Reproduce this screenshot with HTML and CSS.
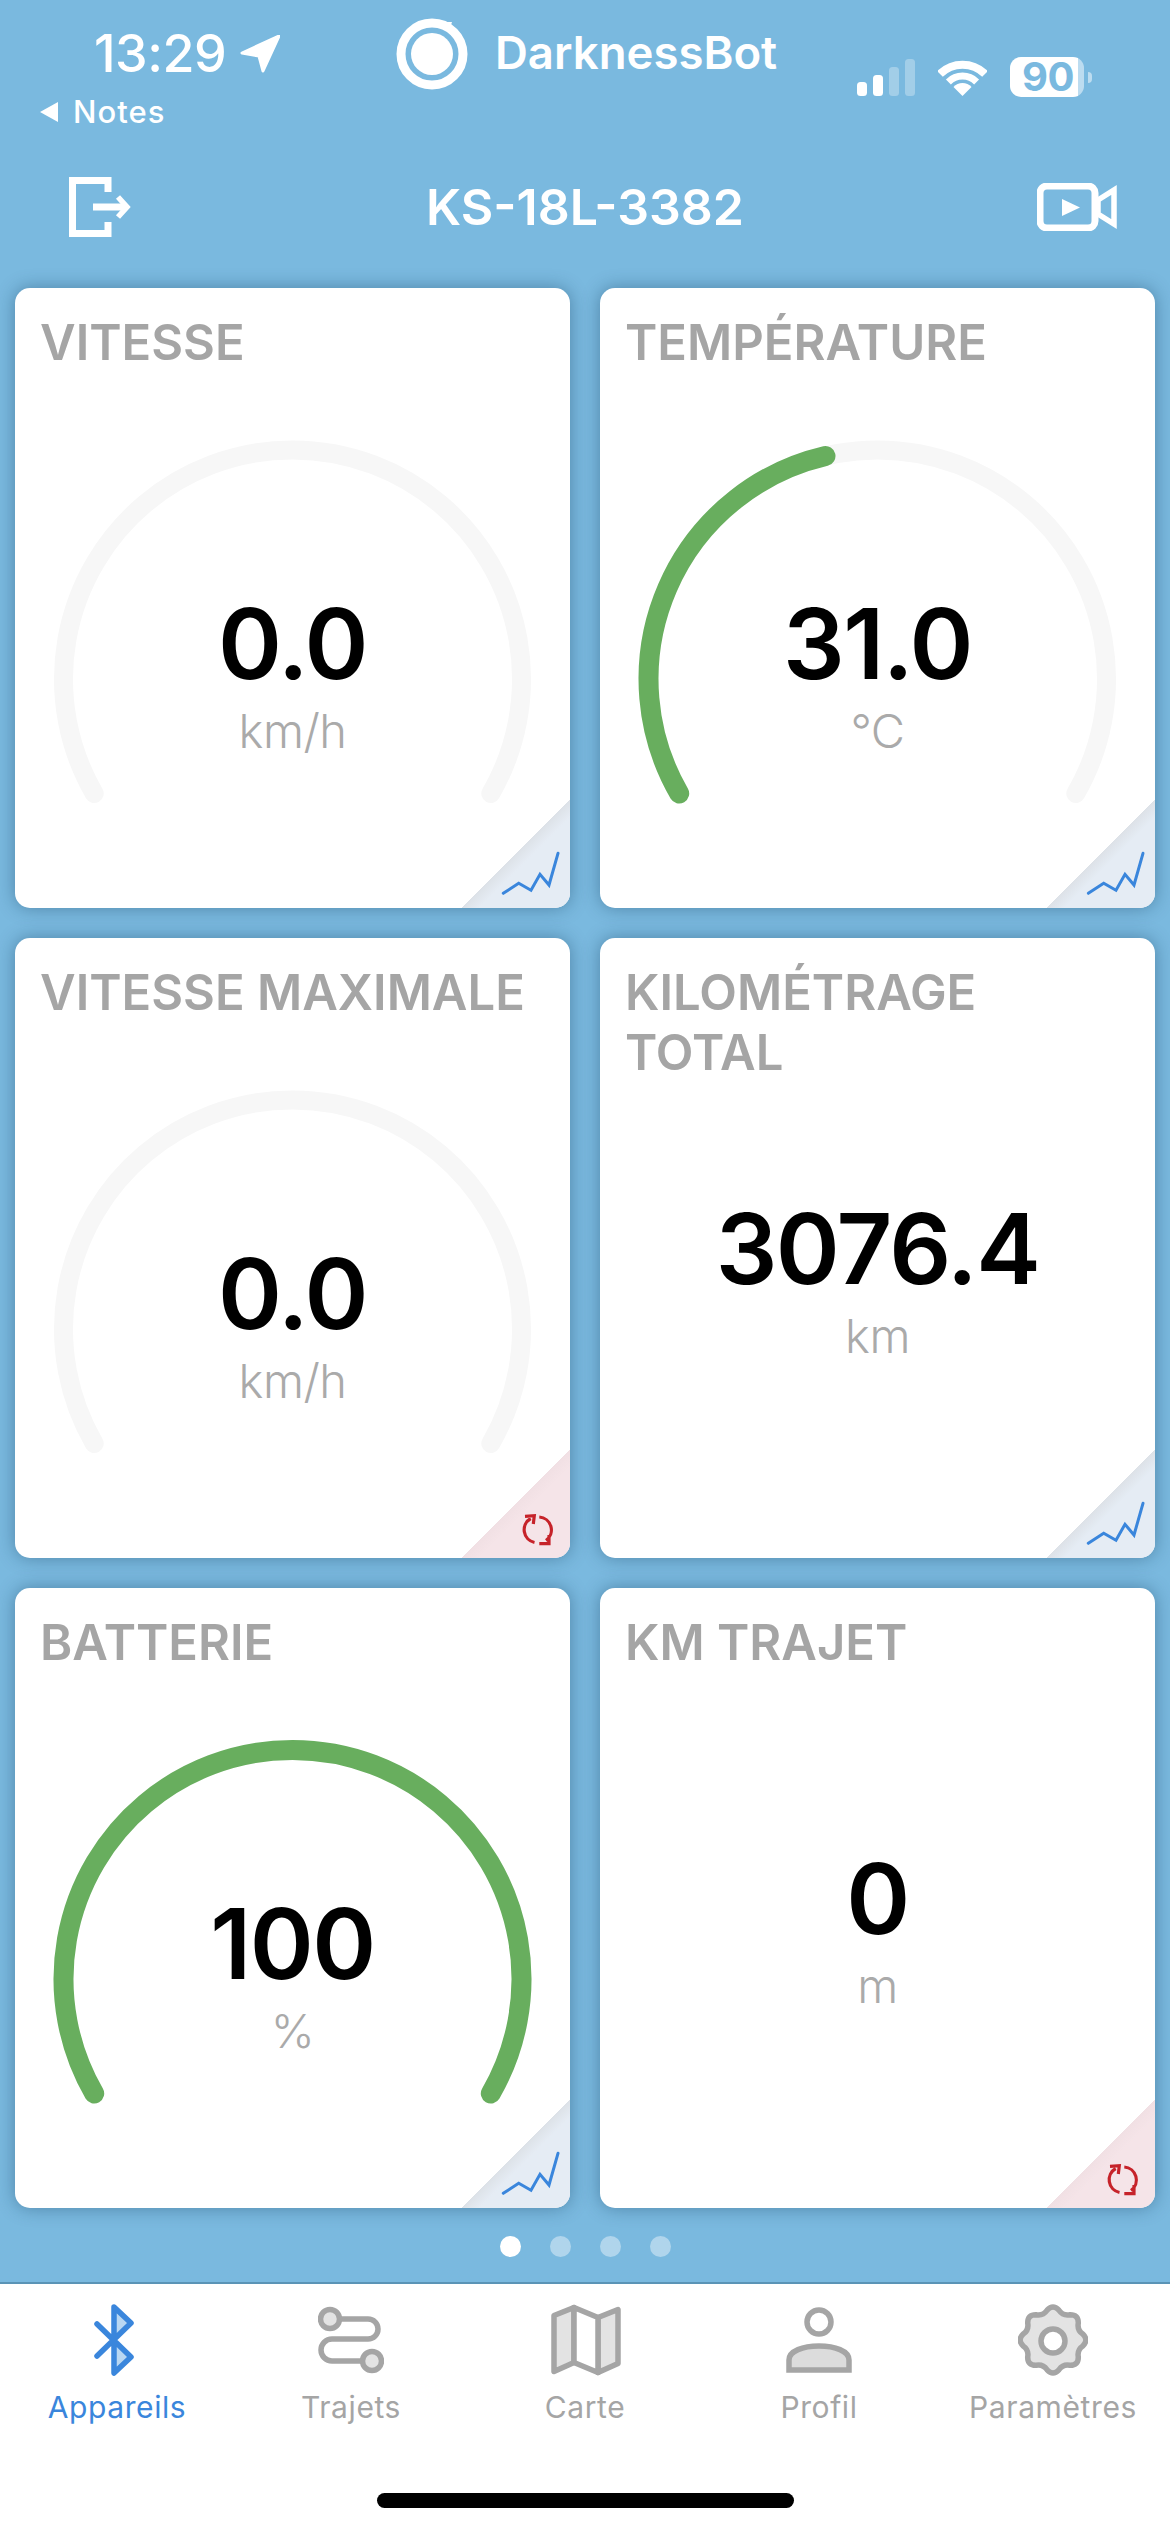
FILE: index.html
```html
<!DOCTYPE html>
<html lang="fr">
<head>
<meta charset="utf-8">
<title>DarknessBot</title>
<link rel="stylesheet" href="styles.css">
</head>
<body>
<div class="screen">
  <header class="status">
    <div class="status-left">
      <div class="clock-row">
        <span class="clock">13:29</span>
        <svg class="loc" width="40" height="38" viewBox="0 0 40 38"><path d="M39 1 L2 18 L19 21 L23 36 Z"/></svg>
      </div>
      <div class="back-row">
        <svg class="back-arrow" width="20" height="20" viewBox="0 0 20 20"><path d="M19 0 V20 L1 10 Z"/></svg>
        <span class="back">Notes</span>
      </div>
    </div>
    <div class="brand">
      <svg class="logo" width="72" height="72" viewBox="0 0 72 72">
        <circle class="logo-ring" cx="36" cy="36" r="31"/>
        <circle class="logo-dot" cx="36" cy="36" r="21"/>
        <path class="logo-tick" d="M44 4 L56 4 L54 10 Z"/>
      </svg>
      <span class="brand-name">DarknessBot</span>
    </div>
    <div class="indicators">
      <svg class="signal" width="58" height="38" viewBox="0 0 58 38">
        <rect x="0" y="23" width="10" height="14" rx="3.5"/>
        <rect x="16" y="16" width="10" height="21" rx="3.5"/>
        <rect class="dim" x="32" y="8" width="10" height="29" rx="3.5"/>
        <rect class="dim" x="48" y="0" width="10" height="37" rx="3.5"/>
      </svg>
      <svg class="wifi" width="49" height="37" viewBox="0 0 49 37">
        <path class="wifi-band" d="M2 15 A32 32 0 0 1 47 15"/>
        <path class="wifi-band thin" d="M10.4 22.9 A20 20 0 0 1 38.6 22.9"/>
        <path d="M24.5 37 L15.5 28 A12 12 0 0 1 33.5 28 Z"/>
      </svg>
      <div class="battery">
        <div class="battery-body"><span class="battery-level">90</span></div>
        <span class="battery-tip"></span>
      </div>
    </div>
  </header>

  <nav class="navbar">
    <svg class="door" width="62" height="60" viewBox="0 0 62 60">
      <path class="ln" d="M39 15 V3.5 H3.5 V56.5 H39 V45"/>
      <path class="ln" d="M24 30 H56"/>
      <path class="ln thin" d="M49 20 L58 30 L49 40"/>
    </svg>
    <h1 class="nav-title">KS-18L-3382</h1>
    <svg class="video" width="80" height="48" viewBox="0 0 80 48">
      <rect class="ln" x="3" y="3" width="55" height="42" rx="7"/>
      <path class="play" d="M25 16 L43 24.5 L25 33 Z"/>
      <path class="ln thin" d="M61 17 L77 7 V41 L61 31 Z"/>
    </svg>
  </nav>

  <main class="grid">
    <section class="card">
      <h2 class="card-title">VITESSE</h2>
      <svg class="gauge" width="555" height="620" viewBox="0 0 555 620">
        <path class="track" d="M79.2 505.5 A229 229 0 1 1 475.8 505.5"/>
      </svg>
      <div class="readout on-gauge"><div class="value">0.0</div><div class="unit">km/h</div></div>
      <div class="corner chart">
        <svg width="108" height="108" viewBox="0 0 108 108"><polyline class="spark" points="41.3,93.3 56.7,83.3 69,90.3 78,74.3 87,85 96,53.3"/></svg>
      </div>
    </section>

    <section class="card">
      <h2 class="card-title">TEMPÉRATURE</h2>
      <svg class="gauge" width="555" height="620" viewBox="0 0 555 620">
        <path class="track" d="M79.2 505.5 A229 229 0 1 1 475.8 505.5"/>
        <path class="fill" d="M79.2 505.5 A229 229 0 0 1 225.5 168"/>
      </svg>
      <div class="readout on-gauge"><div class="value">31.0</div><div class="unit">°C</div></div>
      <div class="corner chart">
        <svg width="108" height="108" viewBox="0 0 108 108"><polyline class="spark" points="41.3,93.3 56.7,83.3 69,90.3 78,74.3 87,85 96,53.3"/></svg>
      </div>
    </section>

    <section class="card">
      <h2 class="card-title">VITESSE MAXIMALE</h2>
      <svg class="gauge" width="555" height="620" viewBox="0 0 555 620">
        <path class="track" d="M79.2 505.5 A229 229 0 1 1 475.8 505.5"/>
      </svg>
      <div class="readout on-gauge"><div class="value">0.0</div><div class="unit">km/h</div></div>
      <div class="corner reset">
        <svg width="108" height="108" viewBox="0 0 108 108"><path class="sync" d="M68.7 68.5 A13 13 0 0 0 72.5 92.5 M63 66.3 L72.3 65.7 L71.3 74 M77.3 67 A13 13 0 0 1 84 90.5 M77.3 93.7 L87 93.7 L87 85"/></svg>
      </div>
    </section>

    <section class="card">
      <h2 class="card-title">KILOMÉTRAGE TOTAL</h2>
      <div class="readout plain"><div class="value">3076.4</div><div class="unit">km</div></div>
      <div class="corner chart">
        <svg width="108" height="108" viewBox="0 0 108 108"><polyline class="spark" points="41.3,93.3 56.7,83.3 69,90.3 78,74.3 87,85 96,53.3"/></svg>
      </div>
    </section>

    <section class="card">
      <h2 class="card-title">BATTERIE</h2>
      <svg class="gauge" width="555" height="620" viewBox="0 0 555 620">
        <path class="fill" d="M79.2 505.5 A229 229 0 1 1 475.8 505.5"/>
      </svg>
      <div class="readout on-gauge"><div class="value">100</div><div class="unit">%</div></div>
      <div class="corner chart">
        <svg width="108" height="108" viewBox="0 0 108 108"><polyline class="spark" points="41.3,93.3 56.7,83.3 69,90.3 78,74.3 87,85 96,53.3"/></svg>
      </div>
    </section>

    <section class="card">
      <h2 class="card-title">KM TRAJET</h2>
      <div class="readout plain"><div class="value">0</div><div class="unit">m</div></div>
      <div class="corner reset">
        <svg width="108" height="108" viewBox="0 0 108 108"><path class="sync" d="M68.7 68.5 A13 13 0 0 0 72.5 92.5 M63 66.3 L72.3 65.7 L71.3 74 M77.3 67 A13 13 0 0 1 84 90.5 M77.3 93.7 L87 93.7 L87 85"/></svg>
      </div>
    </section>
  </main>

  <div class="dots">
    <span class="dot active"></span><span class="dot"></span><span class="dot"></span><span class="dot"></span>
  </div>

  <footer class="tabbar">
    <div class="tabs">
      <div class="tab active">
        <svg class="tab-icon bt" width="42" height="72" viewBox="0 0 42 72">
          <path class="bt-fill" d="M21 3 L38 19 L21 35 Z M21 37 L38 53 L21 69 Z"/>
          <path class="bt-line" d="M4 20 L38 53 L21 69 V3 L38 19 L4 52"/>
        </svg>
        <span class="tab-label">Appareils</span>
      </div>
      <div class="tab">
        <svg class="tab-icon" width="66" height="66" viewBox="0 0 66 66">
          <path class="ico none" d="M21 12 H50 A10 10 0 0 1 50 32 H14 A11 11 0 0 0 14 54 H45"/>
          <circle class="ico" cx="12" cy="12" r="9.5"/>
          <circle class="ico" cx="54" cy="54" r="9.5"/>
        </svg>
        <span class="tab-label">Trajets</span>
      </div>
      <div class="tab">
        <svg class="tab-icon" width="71" height="71" viewBox="0 0 71 71">
          <path class="ico" d="M4 11 L24 3 V58 L4 67 Z M48 13 L68 5 V59 L48 68 Z"/>
          <path class="ico blank" d="M24 3 L48 13 V68 L24 58 Z"/>
        </svg>
        <span class="tab-label">Carte</span>
      </div>
      <div class="tab">
        <svg class="tab-icon" width="66" height="66" viewBox="0 0 66 66">
          <ellipse class="ico blank" cx="33" cy="15" rx="12" ry="12"/>
          <path class="ico body" d="M3 63 V53 C3 44 17 39 33 39 C49 39 63 44 63 53 V63 Z"/>
        </svg>
        <span class="tab-label">Profil</span>
      </div>
      <div class="tab">
        <svg class="tab-icon" width="70" height="70" viewBox="-35 -35 70 70">
          <path class="ico" d="M29.8 -5.9 Q36 0 29.8 5.9 Q24 9.95 25.3 16.9 Q25.5 25.5 16.9 25.3 Q9.95 24 5.9 29.8 Q0 36 -5.9 29.8 Q-9.95 24 -16.9 25.3 Q-25.5 25.5 -25.3 16.9 Q-24 9.95 -29.8 5.9 Q-36 0 -29.8 -5.9 Q-24 -9.95 -25.3 -16.9 Q-25.5 -25.5 -16.9 -25.3 Q-9.95 -24 -5.9 -29.8 Q0 -36 5.9 -29.8 Q9.95 -24 16.9 -25.3 Q25.5 -25.5 25.3 -16.9 Q24 -9.95 29.8 -5.9 Z"/>
          <circle class="ico blank" cx="0" cy="1" r="12"/>
        </svg>
        <span class="tab-label">Paramètres</span>
      </div>
    </div>
    <div class="home-indicator"></div>
  </footer>
</div>
</body>
</html>
```

FILE: styles.css
```css
* { box-sizing: border-box; }
html, body { margin: 0; padding: 0; }
body { width: 1170px; height: 2532px; overflow: hidden; font-family: Inter, "Liberation Sans", sans-serif; }

.screen { width: 1170px; height: 2532px; display: flex; flex-direction: column; background: #7ab9df; }

/* status bar */
.status { height: 150px; display: grid; grid-template-columns: 396px 1fr auto; color: #fff; }
.status-left { padding: 25px 0 0 39px; }
.clock-row { display: flex; align-items: center; padding-left: 55px; height: 58px; gap: 14px; }
.clock { font-size: 52px; font-weight: 500; line-height: 58px; letter-spacing: -0.5px; }
.loc { fill: #fff; stroke: #fff; stroke-width: 3px; stroke-linejoin: round; }
.back-row { display: flex; align-items: center; gap: 14px; margin-top: 15px; height: 28px; }
.back-arrow { fill: #fff; }
.back { font-size: 31px; font-weight: 500; line-height: 28px; letter-spacing: 1px; }

.brand { display: flex; align-items: flex-start; gap: 27px; padding-top: 18px; }
.logo { flex: none; }
.logo-ring { fill: none; stroke: #fff; stroke-width: 9px; }
.logo-dot, .logo-tick { fill: #fff; }
.brand-name { font-size: 45.5px; font-weight: 600; line-height: 70px; }

.indicators { display: flex; align-items: flex-start; padding: 57px 78px 0 0; }
.signal { fill: #fff; margin-top: 2px; }
.signal .dim { opacity: .3; }
.wifi { fill: #fff; margin: 2px 0 0 23px; }
.wifi-band { fill: none; stroke: #fff; stroke-width: 8px; }
.wifi-band.thin { stroke-width: 7px; }
.battery { display: flex; align-items: center; margin-left: 23px; }
.battery-body {
  width: 74px; height: 40px; border-radius: 11px;
  background: linear-gradient(90deg, #fff 92%, #bcdcf0 92%);
  display: flex; align-items: center; padding-left: 12px;
}
.battery-level { font-size: 40px; font-weight: 700; line-height: 40px; color: #7ab9df; letter-spacing: -0.5px; }
.battery-tip { width: 4px; height: 11px; margin-left: 4px; border-radius: 0 6px 6px 0; background: #bcdcf0; }

/* nav */
.navbar { height: 138px; display: grid; grid-template-columns: 1fr auto 1fr; align-items: start; padding: 0 53px; }
.door { margin: 27px 0 0 16px; }
.video { justify-self: end; margin-top: 33px; }
.ln { fill: none; stroke: #fff; stroke-width: 7px; stroke-linejoin: miter; }
.ln.thin { stroke-width: 5.5px; }
.play { fill: #fff; }
.nav-title { margin: 32px 0 0; font-size: 50px; font-weight: 600; line-height: 50px; color: #fff; }

/* cards */
.grid { display: grid; grid-template-columns: repeat(2, 555px); grid-auto-rows: 620px; gap: 30px; padding: 0 15px; }
.card {
  position: relative; display: grid; overflow: hidden;
  background: #fff; border-radius: 15px;
  box-shadow: 0 0 18px rgba(20, 60, 90, .42);
}
.card > * { grid-area: 1 / 1; }
.card-title {
  margin: 0; padding: 25px 25px 0; align-self: start;
  font-size: 49px; font-weight: 600; line-height: 60px; color: #a5a5a5;
}
.gauge { display: block; }
.track { fill: none; stroke: #f7f7f7; stroke-width: 19px; stroke-linecap: round; }
.fill { fill: none; stroke: #68ae5e; stroke-width: 20px; stroke-linecap: round; }

.readout { text-align: center; align-self: start; }
.readout.on-gauge { padding-top: 296px; }
.readout.plain { padding-top: 251px; }
.value { font-size: 97px; font-weight: 600; line-height: 120px; color: #000; letter-spacing: -1.5px; }
.unit { font-size: 47px; font-weight: 300; line-height: 58px; color: #aaa; margin-top: -2px; letter-spacing: -0.5px; }

.corner { position: absolute; right: 0; bottom: 0; width: 108px; height: 108px; }
.corner svg { display: block; }
.corner.chart { background: linear-gradient(135deg, transparent 50%, #dde2e8 50%, #e5ecf4 58%); }
.corner.reset { background: linear-gradient(135deg, transparent 50%, #f1e0e4 50%, #f5e4e8 58%); }
.spark { fill: none; stroke: #3a86dc; stroke-width: 3px; stroke-linecap: round; stroke-linejoin: miter; }
.sync { fill: none; stroke: #c6232a; stroke-width: 3.2px; }

/* pager */
.dots { height: 74px; display: flex; justify-content: center; align-items: center; gap: 29px; padding-top: 2px; }
.dot { width: 21px; height: 21px; border-radius: 50%; background: #b0d5ec; }
.dot.active { background: #fff; }

/* tab bar */
.tabbar { flex: 1; background: #fff; border-top: 2px solid #5a94b6; }
.tabs { display: grid; grid-template-columns: repeat(5, 234px); height: 208px; }
.tab { display: flex; flex-direction: column; align-items: center; padding-top: 20px; color: #a5a5a5; }
.tab.active { color: #3a86dc; }
.tab-icon { height: 72px; }
.bt { margin-left: -6px; }
.tab-label { margin-top: 13px; font-size: 30px; font-weight: 400; line-height: 36px; letter-spacing: .6px; }
.bt-fill { fill: #b9d7f2; }
.bt-line { fill: none; stroke: #3a86dc; stroke-width: 5.5px; stroke-linecap: round; stroke-linejoin: round; }
.ico { fill: #e3e3e3; stroke: #a5a5a5; stroke-width: 5.5px; stroke-linejoin: round; }
.ico.none { fill: none; }
.ico.blank { fill: #fff; }
.ico.body { fill: #dcdcdc; stroke-linejoin: miter; }
.home-indicator { width: 417px; height: 15px; margin: 1px auto 0; border-radius: 8px; background: #000; }
```
